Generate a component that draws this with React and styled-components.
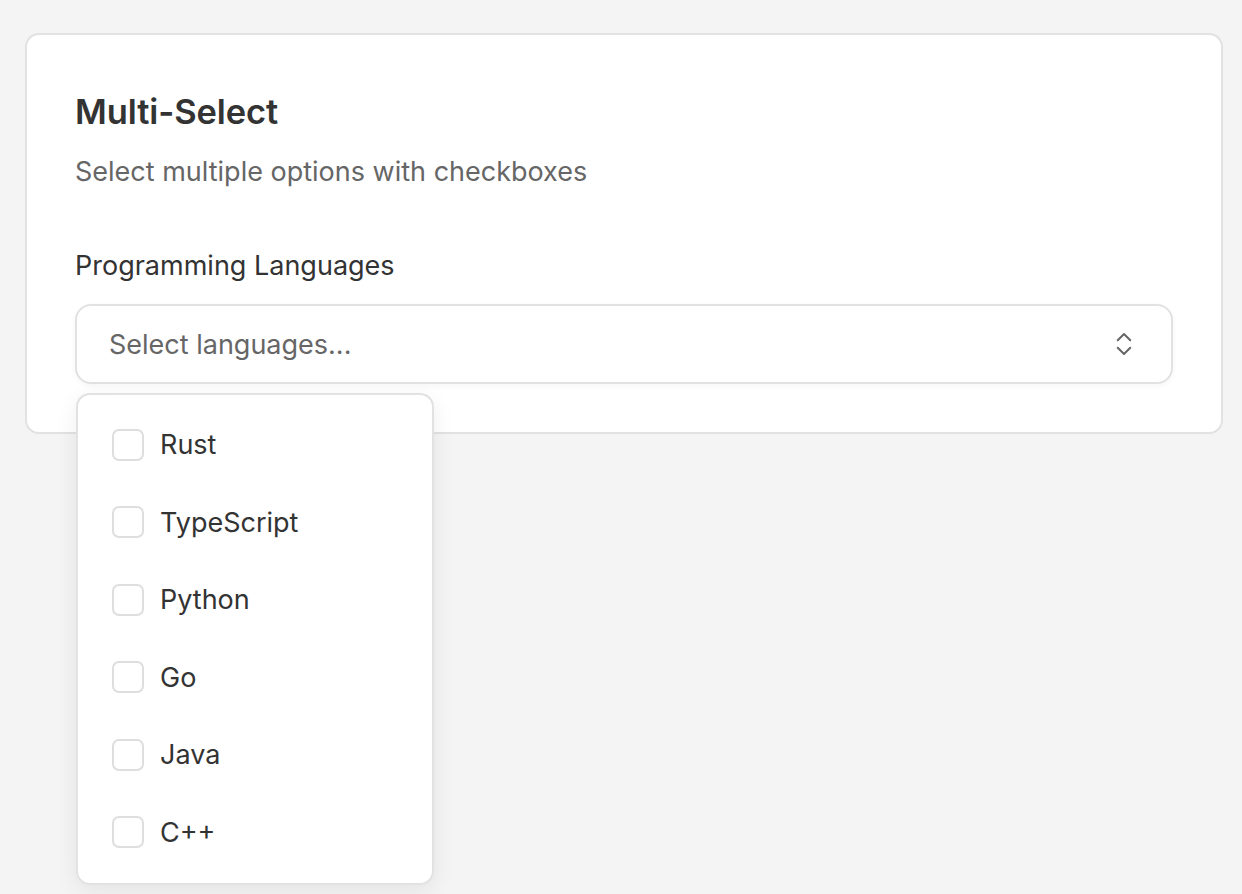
import React, { useState } from 'react'
import styled, { createGlobalStyle } from 'styled-components'
import { ChevronsUpDown } from 'lucide-react'

const GlobalStyle = createGlobalStyle`
	html, body {
		margin: 0;
		padding: 0;
		background: #f4f4f4;
		font-family: Inter, "Noto Sans", "Liberation Sans", sans-serif;
		-webkit-font-smoothing: antialiased;
	}
	#root {
		min-height: 894px;
	}
`

const Page = styled.main`
	padding: 33px 19px 0 25px;
`

const Card = styled.section`
	background: #fff;
	border: 2px solid #e2e2e2;
	border-radius: 14px;
	padding: 55px 48px 48px 48px;
	box-sizing: border-box;
	width: 1198px;
`

const Title = styled.h2`
	margin: 0;
	font-size: 34.5px;
	line-height: 44px;
	font-weight: 600;
	color: #333;
	letter-spacing: -0.1px;
`

const Subtitle = styled.p`
	margin: 20px 0 0;
	font-size: 27px;
	line-height: 36px;
	color: #666;
`

const Label = styled.label`
	display: block;
	margin: 58px 0 20px;
	font-size: 27px;
	line-height: 36px;
	color: #333;
`

const Field = styled.div`
	position: relative;
`

const Trigger = styled.button`
	display: flex;
	align-items: center;
	justify-content: space-between;
	width: 100%;
	height: 80px;
	padding: 0 32px;
	box-sizing: border-box;
	background: #fff;
	border: 2px solid #e2e2e2;
	border-radius: 16px;
	box-shadow: 0 2px 6px rgba(0, 0, 0, 0.04);
	font-family: inherit;
	font-size: 27px;
	color: #666;
	cursor: pointer;
	text-align: left;
`

const Menu = styled.ul`
	position: absolute;
	top: calc(100% + 9px);
	left: 1px;
	width: 358px;
	margin: 0;
	padding: 11px 0 12px;
	list-style: none;
	box-sizing: border-box;
	background: #fff;
	border: 2px solid #e2e2e2;
	border-radius: 14px;
	box-shadow: 0 6px 22px rgba(0, 0, 0, 0.07);
	z-index: 2;
`

const Option = styled.li`
	display: flex;
	align-items: center;
	gap: 16px;
	height: 77.5px;
	padding: 0 34px;
	font-size: 27px;
	color: #333;
	cursor: pointer;
`

const Box = styled.span`
	display: flex;
	align-items: center;
	justify-content: center;
	width: 32px;
	height: 32px;
	box-sizing: border-box;
	border: 2px solid ${props => props.checked ? '#333' : '#dedede'};
	background: ${props => props.checked ? '#333' : '#fff'};
	border-radius: 7px;
	color: #fff;
	font-size: 18px;
`

const languages = ['Rust', 'TypeScript', 'Python', 'Go', 'Java', 'C++']

export default function App() {
	const [picked, setPicked] = useState([])
	const toggle = lang =>
		setPicked(p => p.includes(lang) ? p.filter(x => x !== lang) : [...p, lang])

	return (
		<Page>
			<GlobalStyle />
			<Card>
				<Title>Multi-Select</Title>
				<Subtitle>Select multiple options with checkboxes</Subtitle>
				<Label>Programming Languages</Label>
				<Field>
					<Trigger>
						<span>{picked.length ? picked.join(', ') : 'Select languages...'}</span>
						<ChevronsUpDown size={30} strokeWidth={1.6} color="#666" />
					</Trigger>
					<Menu>
						{languages.map(lang => (
							<Option key={lang} onClick={() => toggle(lang)}>
								<Box checked={picked.includes(lang)}>{picked.includes(lang) ? '✓' : ''}</Box>
								{lang}
							</Option>
						))}
					</Menu>
				</Field>
			</Card>
		</Page>
	)
}
